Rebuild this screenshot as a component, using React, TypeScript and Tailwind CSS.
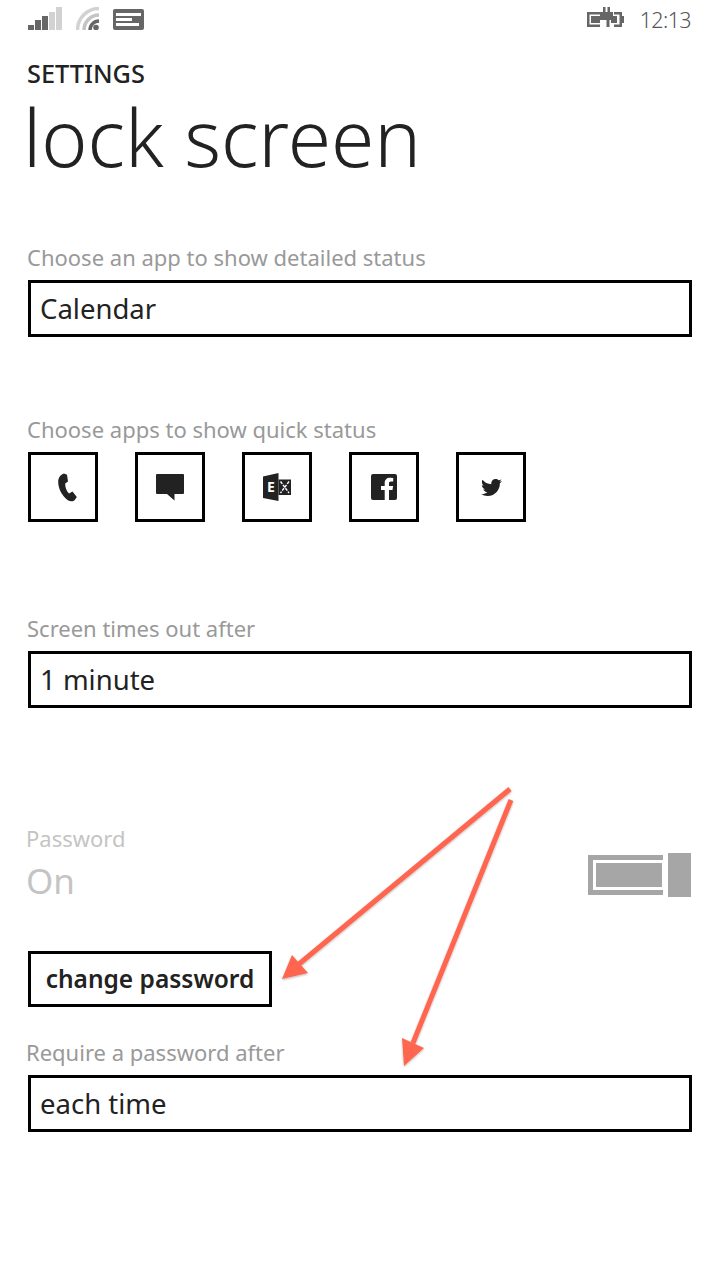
import React from "react";
import { FaTwitter } from "react-icons/fa";

const font = { fontFamily: '"Noto Sans", "Open Sans", sans-serif' };

function Field({ text }: { text: string }) {
  return (
    <div className="flex h-[57px] w-[664px] items-center border-[3px] border-black pl-[9px] text-[27.5px] text-[#222]">
      {text}
    </div>
  );
}

function Tile({ children }: { children: React.ReactNode }) {
  return (
    <div className="flex h-[70px] w-[70px] items-center justify-center border-[3px] border-black">
      {children}
    </div>
  );
}

function Label({ text }: { text: string }) {
  return <div className="text-[22px] leading-[30px] text-[#999]">{text}</div>;
}

function StatusBar() {
  return (
    <div className="flex h-[34px] items-start justify-between">
      <div className="ml-[28px] mt-[7px] flex items-start gap-[14px]">
        <svg width="34" height="23" viewBox="0 0 34 23">
          <rect x="0" y="18" width="6" height="5" fill="#666" />
          <rect x="7" y="13" width="6" height="10" fill="#666" />
          <rect x="14" y="9" width="6" height="14" fill="#666" />
          <rect x="21" y="5" width="6" height="18" fill="#d2d2d2" />
          <rect x="28" y="0" width="6" height="23" fill="#d2d2d2" />
        </svg>
        <svg width="23" height="23" viewBox="0 0 23 23" fill="none">
          <path d="M1.5 23 A21.5 21.5 0 0 1 23 1.5" stroke="#d2d2d2" strokeWidth="3.5" />
          <path d="M8 23 A15 15 0 0 1 23 8" stroke="#c4c4c4" strokeWidth="3.5" />
          <path d="M14 23 A9 9 0 0 1 23 14" stroke="#666" strokeWidth="3.5" />
          <circle cx="20" cy="20.5" r="2.8" fill="#666" />
        </svg>
        <svg className="mt-[2px]" width="31" height="21" viewBox="0 0 31 21">
          <rect width="31" height="21" rx="2" fill="#666" />
          <rect x="3" y="4" width="25" height="3" fill="#fff" />
          <rect x="3" y="9" width="16" height="3" fill="#fff" />
          <rect x="3" y="14" width="23" height="3" fill="#fff" />
        </svg>
      </div>
      <div className="mr-[29px] flex items-start gap-[16px]">
        <svg className="mt-[7px]" width="37" height="20" viewBox="0 0 37 20">
          <path d="M0 5h13v2.5H2.5v10H13V20H0z" fill="#666" />
          <rect x="4" y="9" width="9" height="7" fill="#666" />
          <path d="M27 5h8v15h-8v-2.5h5.5v-10H27z" fill="#666" />
          <rect x="35" y="9" width="2" height="7" fill="#666" />
          <rect x="24" y="9" width="6" height="7" fill="#666" />
          <path d="M16 0h2.5v5h2V0H23v5h3v8h-3.5v7h-3v-7H13V5h3z" fill="#666" />
        </svg>
        <div className="pt-[5px] text-[21.5px] font-light leading-[30px] tracking-[-0.6px] text-[#555]">12:13</div>
      </div>
    </div>
  );
}

export default function App() {
  return (
    <div className="relative h-[1280px] w-[720px] overflow-hidden bg-white text-[#222]" style={font}>
      <StatusBar />
      <div className="mt-[24px] pl-[27px] text-[25.3px] font-medium leading-[30px] text-[#222]">SETTINGS</div>
      <div className="mt-[9px] pl-[23px] text-[78.5px] font-light leading-[80px] text-[#222]">lock screen</div>

      <div className="mt-[65px] pl-[27px]">
        <Label text="Choose an app to show detailed status" />
      </div>
      <div className="mt-[8px] pl-[28px]">
        <Field text="Calendar" />
      </div>

      <div className="mt-[77px] pl-[27px]">
        <Label text="Choose apps to show quick status" />
      </div>
      <div className="mt-[8px] flex gap-[37px] pl-[28px]">
        <Tile>
          <svg className="ml-[8px]" width="20" height="29" viewBox="0 0 20 29">
            <path
              d="M7 0.5 L10 1.8 L11 8.5 L8.2 10.5 C8 14 9.5 18 12 20.5 L15.5 18.5 L19.8 24 L17.8 27 C16 28.8 13 28.5 10.5 27 C5 23 1 15 1.2 8.5 C1.2 5 3.5 1.5 7 0.5 Z"
              fill="#222"
            />
          </svg>
        </Tile>
        <Tile>
          <svg width="28" height="27" viewBox="0 0 28 27">
            <path d="M1 0h26a1 1 0 0 1 1 1v18a1 1 0 0 1-1 1H18.5v6.5L11 20H1a1 1 0 0 1-1-1V1a1 1 0 0 1 1-1z" fill="#222" />
          </svg>
        </Tile>
        <Tile>
          <svg width="28" height="28" viewBox="0 0 28 28">
            <path d="M0 3.5 L15.5 0 V28 L0 25 Z" fill="#222" />
            <text x="4" y="19" fontSize="14" fontWeight="700" fill="#fff" fontFamily="Noto Sans, sans-serif">E</text>
            <rect x="15.5" y="6.5" width="12.5" height="15.5" fill="#222" />
            <path d="M17.5 8.5 L26 20 M26 8.5 L17.5 20" stroke="#fff" strokeWidth="1.4" strokeDasharray="3 1.2" />
          </svg>
        </Tile>
        <Tile>
          <svg width="26" height="26" viewBox="0 0 26 26">
            <path
              d="M2 0h22a2 2 0 0 1 2 2v22a2 2 0 0 1-2 2h-6V16h3.5l.6-4H18V9.5c0-1.2.4-2 2-2h2.2V4a20 20 0 0 0-3.2-.2c-3.2 0-5.3 2-5.3 5.4V12H10v4h3.7v10H2a2 2 0 0 1-2-2V2a2 2 0 0 1 2-2z"
              fill="#222"
            />
          </svg>
        </Tile>
        <Tile>
          <FaTwitter size={21} color="#222" />
        </Tile>
      </div>

      <div className="mt-[91px] pl-[27px]">
        <Label text="Screen times out after" />
      </div>
      <div className="mt-[8px] pl-[28px]">
        <Field text="1 minute" />
      </div>

      <div className="mt-[115px] flex items-start justify-between pl-[26px] pr-[29px]">
        <div className="text-[#c4c4c4]">
          <div className="text-[22px] leading-[30px]">Password</div>
          <div className="mt-[1px] text-[35px] leading-[54px]">On</div>
        </div>
        <div className="mt-[30px] flex items-start gap-[5px]">
          <div className="mt-[2px] h-[40px] w-[75px] border-y-[5px] border-l-[5px] border-[#a6a6a6] p-[3px] pr-0">
            <div className="h-full w-[66px] bg-[#a6a6a6]" />
          </div>
          <div className="h-[44px] w-[23px] bg-[#a6a6a6]" />
        </div>
      </div>

      <div className="mt-[43px] pl-[28px]">
        <div className="flex h-[56px] w-[244px] items-center justify-center border-[3px] border-black text-[24.5px] font-semibold text-[#222]">
          change password
        </div>
      </div>

      <div className="mt-[30px] pl-[26px]">
        <Label text="Require a password after" />
      </div>
      <div className="mt-[8px] pl-[28px]">
        <Field text="each time" />
      </div>

      <svg className="absolute left-0 top-0" width="720" height="1280" viewBox="0 0 720 1280">
        <defs>
          <filter id="s" x="-10%" y="-10%" width="120%" height="120%">
            <feDropShadow dx="0" dy="1" stdDeviation="1" floodColor="#000" floodOpacity="0.3" />
          </filter>
        </defs>
        <g filter="url(#s)">
          <line x1="510" y1="789" x2="299" y2="964" stroke="#ff6650" strokeWidth="5" />
          <polygon points="282,979 292,955 308,973" fill="#ff6650" />
          <line x1="511" y1="800" x2="413" y2="1043" stroke="#ff6650" strokeWidth="5" />
          <polygon points="404,1066 402,1038 424,1048" fill="#ff6650" />
        </g>
      </svg>
    </div>
  );
}
